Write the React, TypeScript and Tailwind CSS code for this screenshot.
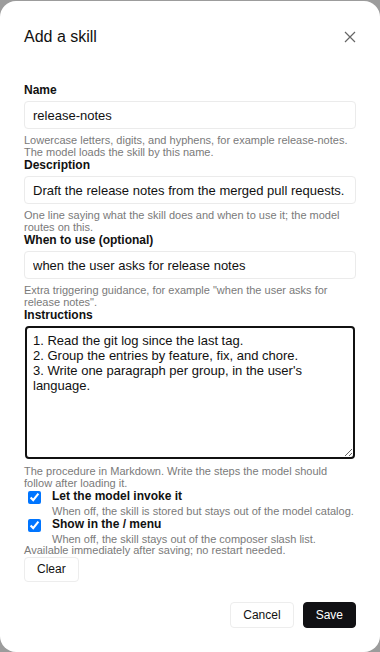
import { useState } from 'react';

function Field({
    label,
    value,
    help,
}: {
    label: string;
    value: string;
    help: string;
}) {
    return (
        <div className="flex flex-col">
            <label className="text-[12px] font-bold leading-[14px] text-[#111]">{label}</label>
            <input
                type="text"
                defaultValue={value}
                className="mt-1 h-[28px] w-full rounded-[4px] border border-[#ebebeb] bg-white px-2 text-[13px] text-[#111] outline-none"
            />
            <p className="mt-[5px] text-[11px] leading-[12px] text-[#7a7a7a]">{help}</p>
        </div>
    );
}

function Toggle({ label, help }: { label: string; help: string }) {
    const [on, setOn] = useState(true);
    return (
        <label className="flex items-start">
            <input
                type="checkbox"
                checked={on}
                onChange={e => setOn(e.target.checked)}
                className="mt-[2px] mr-[3px] ml-1 h-[13px] w-[13px] shrink-0 accent-[#0075ff]"
            />
            <span className="ml-2 flex flex-col">
                <span className="text-[12px] font-bold leading-[14px] text-[#111]">{label}</span>
                <span className="mt-[2px] text-[11px] leading-[12px] text-[#7a7a7a]">{help}</span>
            </span>
        </label>
    );
}

export default function App() {
    const [instructions, setInstructions] = useState(
        "1. Read the git log since the last tag.\n2. Group the entries by feature, fix, and chore.\n3. Write one paragraph per group, in the user's language."
    );

    return (
        <div className="h-[652px] w-[380px] bg-[#9c9c9c] pt-px font-['Liberation_Sans',Arial,sans-serif]">
            <div className="flex h-[651px] flex-col rounded-[16px] bg-white px-6">
                <div className="flex h-[71px] items-center justify-between">
                    <h2 className="text-[16px] leading-[20px] text-[#111]">Add a skill</h2>
                    <button className="mr-[-1px] text-[#666]" aria-label="Close">
                        <svg width="14" height="14" viewBox="0 0 14 14" fill="none" stroke="currentColor" strokeWidth="1.2">
                            <path d="M2 2l10 10M12 2L2 12" />
                        </svg>
                    </button>
                </div>

                <div className="mt-[11px] flex flex-col">
                    <Field
                        label="Name"
                        value="release-notes"
                        help="Lowercase letters, digits, and hyphens, for example release-notes. The model loads the skill by this name."
                    />
                    <Field
                        label="Description"
                        value="Draft the release notes from the merged pull requests."
                        help="One line saying what the skill does and when to use it; the model routes on this."
                    />
                    <Field
                        label="When to use (optional)"
                        value="when the user asks for release notes"
                        help={'Extra triggering guidance, for example "when the user asks for release notes".'}
                    />

                    <div className="flex flex-col">
                        <label className="text-[12px] font-bold leading-[14px] text-[#111]">Instructions</label>
                        <textarea
                            value={instructions}
                            onChange={e => setInstructions(e.target.value)}
                            className="mx-px mt-[4px] h-[133px] rounded-[4px] border-2 border-[#111] px-[6px] pt-[5px] text-[13px] leading-[15px] text-[#111] outline-none"
                        />
                        <p className="mt-[6px] text-[11px] leading-[12px] text-[#7a7a7a]">
                            The procedure in Markdown. Write the steps the model should follow after loading it.
                        </p>
                    </div>

                    <div className="flex flex-col">
                        <Toggle
                            label="Let the model invoke it"
                            help="When off, the skill is stored but stays out of the model catalog."
                        />
                        <Toggle
                            label="Show in the / menu"
                            help="When off, the skill stays out of the composer slash list."
                        />
                    </div>

                    <p className="mt-[-1px] text-[11px] leading-[12px] text-[#7a7a7a]">
                        Available immediately after saving; no restart needed.
                    </p>

                    <div>
                        <button className="h-[25px] rounded-[4px] border border-[#ededed] bg-white px-3 text-[12px] text-[#111]">
                            Clear
                        </button>
                    </div>
                </div>

                <div className="mt-[20px] flex justify-end gap-[9px]">
                    <button className="h-[26px] rounded-[4px] border border-[#ededed] bg-white px-3 text-[12px] text-[#111]">
                        Cancel
                    </button>
                    <button className="h-[26px] rounded-[4px] border border-[#111114] bg-[#111114] px-3 text-[12px] text-white">
                        Save
                    </button>
                </div>
            </div>
        </div>
    );
}
